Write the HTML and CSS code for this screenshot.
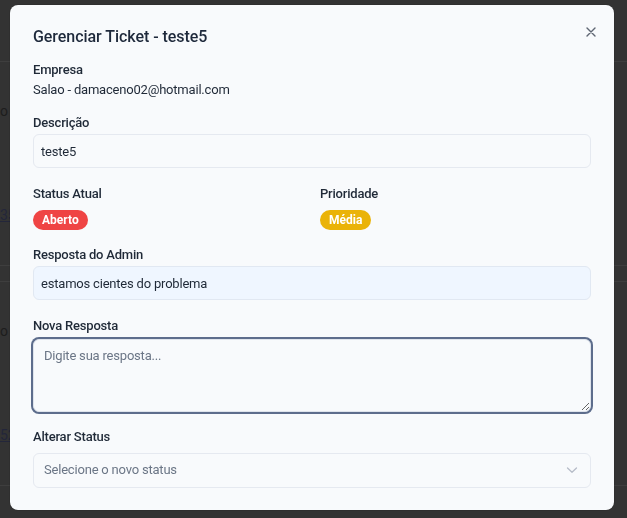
FILE: index.html
```html
<!DOCTYPE html>
<html lang="pt-BR">
<head>
<meta charset="utf-8">
<title>Gerenciar Ticket</title>
<link rel="stylesheet" href="styles.css">
</head>
<body>
<div class="page">
  <div class="row row-head"></div>
  <div class="row row-item">
    <span class="cell">o</span>
    <span class="cell link">35</span>
  </div>
  <div class="row row-gap"></div>
  <div class="row row-item">
    <span class="cell">o</span>
    <span class="cell link">52</span>
  </div>
</div>
<div class="overlay">
  <div class="modal">
    <button class="close" aria-label="Fechar">
      <svg width="10" height="10" viewBox="0 0 10 10"><path d="M1 1L9 9M9 1L1 9" stroke="#5f6673" stroke-width="1.4" stroke-linecap="round" fill="none"/></svg>
    </button>
    <h2 class="title">Gerenciar Ticket - teste5</h2>

    <div class="field f-empresa">
      <div class="label">Empresa</div>
      <div class="value">Salao - damaceno02@hotmail.com</div>
    </div>

    <div class="field f-desc">
      <div class="label">Descrição</div>
      <div class="box">teste5</div>
    </div>

    <div class="field f-status two-col">
      <div>
        <div class="label">Status Atual</div>
        <span class="badge red">Aberto</span>
      </div>
      <div>
        <div class="label">Prioridade</div>
        <span class="badge yellow">Média</span>
      </div>
    </div>

    <div class="field f-resp">
      <div class="label">Resposta do Admin</div>
      <div class="box blue">estamos cientes do problema</div>
    </div>

    <div class="field f-nova">
      <div class="label">Nova Resposta</div>
      <textarea class="textarea" placeholder="Digite sua resposta..."></textarea>
    </div>

    <div class="field f-alt">
      <div class="label">Alterar Status</div>
      <div class="select">
        <span>Selecione o novo status</span>
        <svg width="12" height="8" viewBox="0 0 12 8"><path d="M1.5 2L6 6.2L10.5 2" stroke="#b6bcc8" stroke-width="1.3" fill="none" stroke-linecap="round" stroke-linejoin="round"/></svg>
      </div>
    </div>
  </div>
</div>
</body>
</html>
```
FILE: styles.css
```css
* { box-sizing: border-box; }
html, body { margin: 0; height: 100%; }
body {
  background: #333333;
  font-family: Roboto, "Noto Sans", sans-serif;
  overflow: hidden;
}
.row {
  border-bottom: 1px solid #3e3e3e;
}
.row-head { height: 62px; }
.row-item {
  height: 204px;
  display: flex;
  flex-direction: column;
  gap: 86px;
  padding-top: 40px;
}
.row-gap { height: 16px; }
.cell {
  display: block;
  font-size: 14px;
  line-height: 18px;
  color: #1d1d1d;
}
.link { text-decoration: underline; color: #23263a; }

.overlay {
  position: fixed;
  inset: 0;
  padding: 5px 13px 0 10px;
}
.modal {
  position: relative;
  width: 604px;
  height: 505px;
  background: #f8fafc;
  border-radius: 8px;
  padding: 20px 23px 22px 23px;
  color: #1f2937;
  box-shadow: 0 0 0 1px rgba(0,0,0,0.08);
}
.close {
  position: absolute;
  top: 22px;
  right: 18px;
  width: 10px;
  height: 10px;
  padding: 0;
  border: 0;
  background: none;
  display: flex;
}
.title {
  margin: 0;
  font-size: 16px;
  line-height: 24px;
  font-weight: 500;
  letter-spacing: -0.05px;
  color: #1e293b;
}
.label, .value, .box, .textarea, .select {
  font-size: 13px;
  letter-spacing: -0.2px;
}
.label {
  line-height: 20px;
  font-weight: 500;
  color: #1f2937;
}
.value {
  line-height: 20px;
  color: #1f2937;
}
.f-empresa { margin-top: 11px; }
.f-desc { margin-top: 13px; }
.f-desc .box { margin-top: 1px; }
.f-status { margin-top: 16px; }
.f-resp { margin-top: 15px; }
.f-resp .box { margin-top: 1px; }
.f-nova { margin-top: 16px; }
.f-alt { margin-top: 15px; }

.two-col {
  display: grid;
  grid-template-columns: 1fr 1fr;
  column-gap: 16px;
}
.box {
  height: 34px;
  border: 1px solid #e5e9f0;
  border-radius: 6px;
  padding: 0 7px;
  display: flex;
  align-items: center;
  color: #1f2937;
  background: #f8fafc;
}
.box.blue { background: #eff6ff; border-color: #e1e8f2; }
.badge {
  display: inline-flex;
  align-items: center;
  height: 20px;
  margin-top: 6px;
  padding: 0 9px;
  border-radius: 10px;
  font-size: 12px;
  font-weight: 700;
  color: #ffffff;
}
.badge.red { background: #ef4444; }
.badge.yellow { background: #eab308; }

.textarea {
  display: block;
  width: 100%;
  height: 73px;
  margin-top: 3px;
  border: 1px solid #dfe4ec;
  border-radius: 6px;
  box-shadow: 0 0 0 2px #5d6d8c;
  background: #f8fafc;
  padding: 8px 10px;
  font-family: inherit;
  color: #1f2937;
  resize: vertical;
  outline: none;
}
.textarea::placeholder { color: #6b7686; }

.select {
  height: 35px;
  margin-top: 6px;
  border: 1px solid #e5e9f0;
  border-radius: 6px;
  padding: 0 12px 2px 10px;
  display: flex;
  align-items: center;
  justify-content: space-between;
  color: #6b7686;
}
```
